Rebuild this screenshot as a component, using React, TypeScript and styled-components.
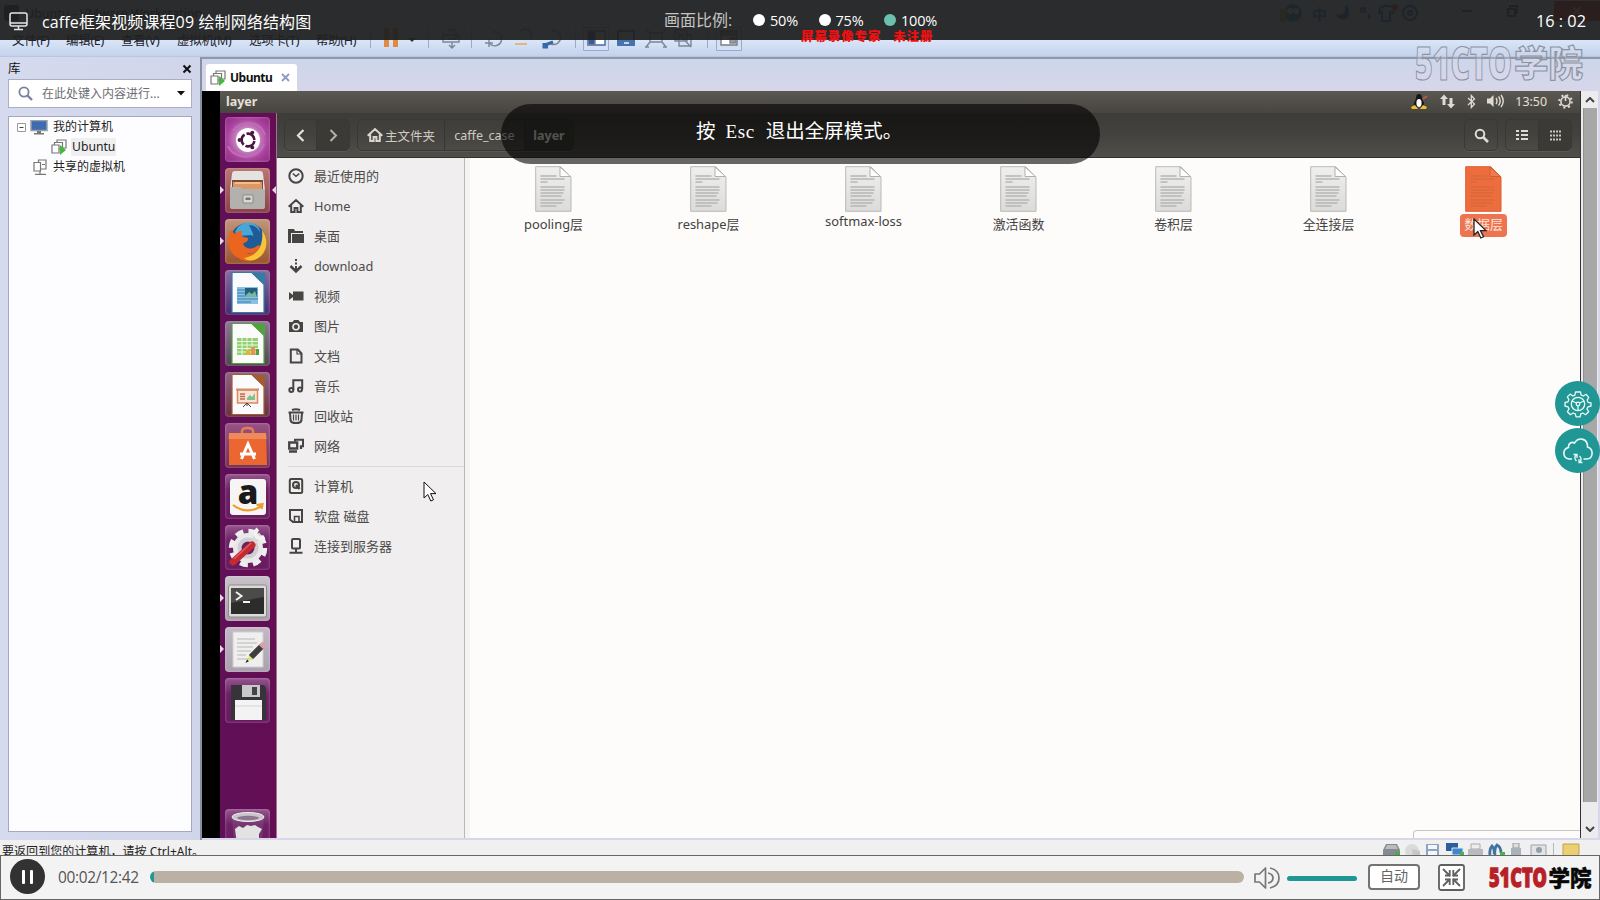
import React from "react";
import styled, { createGlobalStyle } from "styled-components";

const Global = createGlobalStyle`
  * { box-sizing: border-box; }
  body { margin: 0; background: #fff; font-family: "Noto Sans", "Noto Sans CJK SC", sans-serif; }
  svg { display: block; flex: none; }
`;

const Screen = styled.div`
  position: relative;
  width: 1600px;
  height: 900px;
  overflow: hidden;
  display: flex;
  flex-direction: column;
`;

/* ---------- VMware window ---------- */
const Workstation = styled.div`
  height: 855px;
  display: flex;
  flex-direction: column;
  overflow: hidden;
  background: #d3d7eb;
`;
const WindowTitle = styled.div`
  height: 26px;
  flex: none;
  display: flex;
  align-items: center;
  padding-left: 4px;
  gap: 6px;
  background: #d9e3f5;
  font-size: 12.5px;
  color: #111;
  white-space: nowrap;
`;
const TitleMark = styled.span`
  width: 15px;
  height: 16px;
  background: #222;
  border-radius: 3px;
`;
const TitleText = styled.span`
  width: 180px;
`;
const ImeBar = styled.div`
  margin-left: 1068px;
  width: 150px;
  height: 26px;
  display: flex;
  align-items: center;
  gap: 8px;
  color: #0a60d8;
  font-weight: 700;
  font-size: 15px;
`;
const WindowButtons = styled.div`
  display: flex;
  align-items: center;
  height: 22px;
  margin: -4px 0 0 auto;
  gap: 26px;
  color: #111;
  font-size: 14px;
`;
const CloseBox = styled.span`
  width: 46px;
  height: 20px;
  background: #d00000;
  color: #fff;
  text-align: center;
`;
const MenuBar = styled.div`
  height: 31px;
  flex: none;
  display: flex;
  align-items: center;
  padding: 0 0 4px 12px;
  background: linear-gradient(#dbe6f8 30%, #dbe6f8 45%, #c3d2ec);
  border-bottom: 1px solid #bcc5dc;
  font-size: 12.5px;
  color: #1c222c;
`;
const MenuItem = styled.span<{ $w: number }>`
  width: ${(p) => p.$w}px;
  white-space: nowrap;
  letter-spacing: -0.3px;
`;
const Body = styled.div`
  height: 783px;
  flex: none;
  display: flex;
`;
const Library = styled.div`
  width: 200px;
  flex: none;
  padding: 0 8px 0 8px;
  display: flex;
  flex-direction: column;
  background: linear-gradient(90deg, #d6daee, #d0d5ea);
`;
const LibraryHead = styled.div`
  height: 22px;
  flex: none;
  display: flex;
  align-items: center;
  justify-content: space-between;
  font-size: 12.5px;
  line-height: 16px;
  padding-top: 1px;
  color: #111;
`;
const SearchField = styled.div`
  height: 29px;
  flex: none;
  border: 1px solid #a9aec4;
  background: #fff;
  display: flex;
  align-items: center;
  padding: 0 6px 1px 9px;
  font-size: 12px;
  color: #6c6c70;
`;
const SearchHint = styled.span`
  margin-left: 9px;
  flex: 1;
  white-space: nowrap;
`;
const Tree = styled.div`
  margin-top: 8px;
  height: 716px;
  border: 1px solid #a3a9bd;
  background: #fdfdff;
  font-size: 12px;
  color: #222;
`;
const TreeRow = styled.div<{ $indent: number }>`
  height: 20px;
  display: flex;
  align-items: center;
  gap: 4px;
  padding-left: ${(p) => p.$indent}px;
`;
const TreeLabel = styled.span<{ $active?: boolean }>`
  padding: 0 1px;
  line-height: 18px;
  font-size: ${(p) => (p.$active ? 12.2 : 12)}px;
  background: ${(p) => (p.$active ? "#efefef" : "transparent")};
`;
const Main = styled.div`
  flex: 1;
  min-width: 0;
  display: flex;
  flex-direction: column;
  border-top: 2px solid #8d99ad;
  border-left: 2px solid #8790a3;
  background: linear-gradient(#cdd6ea, #d7d6ea 33px);
`;
const TabStrip = styled.div`
  height: 32px;
  flex: none;
  padding: 5px 0 0 4px;
  display: flex;
`;
const Tab = styled.div`
  width: 91px;
  height: 27px;
  background: #fff;
  border-radius: 3px 3px 0 0;
  display: flex;
  align-items: center;
  padding: 0 7px 0 4px;
  font-size: 12px;
  font-weight: 700;
  color: #111;
`;
const TabName = styled.span`
  flex: 1;
  margin-left: 4px;
  letter-spacing: -0.5px;
`;
const Guest = styled.div`
  height: 747px;
  flex: none;
  display: flex;
  overflow: hidden;
`;
const BlackEdge = styled.div`
  width: 18px;
  flex: none;
  background: #000;
`;
const StatusBar = styled.div`
  height: 15px;
  flex: none;
  display: flex;
  justify-content: space-between;
  background: #f0f0f1;
  padding: 2px 20px 0 2px;
  overflow: hidden;
  font-size: 12px;
  line-height: 20px;
  letter-spacing: 0.05px;
  color: #222;
`;
const StatusIcons = styled.div`
  display: flex;
  padding-top: 1px;
`;

/* ---------- Ubuntu guest ---------- */
const Ubuntu = styled.div`
  width: 1361px;
  flex: none;
  display: flex;
  flex-direction: column;
  border-right: 1px solid #333;
`;
const Panel = styled.div`
  height: 22px;
  flex: none;
  display: flex;
  align-items: center;
  justify-content: space-between;
  padding: 0 7px 2px 6px;
  background: linear-gradient(#5b5852, #474540);
  color: #e4e0d8;
`;
const PanelTitle = styled.b`
  font-size: 12.5px;
`;
const Indicators = styled.div`
  display: flex;
  align-items: center;
  gap: 11px;
`;
const Clock = styled.span`
  font-size: 12.4px;
`;
const Session = styled.div`
  flex: 1;
  min-height: 0;
  display: flex;
`;
const Launcher = styled.div`
  width: 57px;
  flex: none;
  padding: 4px 0 0 5px;
  display: flex;
  flex-direction: column;
  gap: 6px;
  background: linear-gradient(90deg, #5f1057, #640d53);
  border-right: 1px solid #9b7497;
  overflow: hidden;
`;
const Tile = styled.div<{ $bg: string; $run?: boolean; $push?: number }>`
  position: relative;
  width: 45px;
  height: 45px;
  flex: none;
  margin-top: ${(p) => p.$push ?? 0}px;
  border-radius: 4px;
  background: ${(p) => p.$bg};
  box-shadow: inset 0 0 2px 1px rgba(255, 255, 255, 0.18);
  &::before {
    content: "";
    display: ${(p) => (p.$run ? "block" : "none")};
    position: absolute;
    left: -5px;
    top: 18px;
    border: 4px solid transparent;
    border-left-color: #e6d7e4;
    border-right-width: 0;
  }
`;
const FocusMark = styled.i`
  position: absolute;
  right: -6px;
  top: 18px;
  border: 4px solid transparent;
  border-right-color: #e6d7e4;
  border-left-width: 0;
`;
const Files = styled.div`
  flex: 1;
  min-width: 0;
  display: flex;
  flex-direction: column;
`;
const Toolbar = styled.div`
  height: 45px;
  flex: none;
  display: flex;
  align-items: center;
  padding: 0 8px 0 7px;
  background: linear-gradient(#3d3c38, #44423e 50%, #504f4a);
  border-bottom: 1px solid #33322f;
  color: #cfcbc3;
  font-size: 12.5px;
`;
const ButtonGroup = styled.div<{ $gap?: number }>`
  height: 32px;
  display: flex;
  margin-left: ${(p) => p.$gap ?? 0}px;
  border: 1px solid #393834;
  border-radius: 5px;
  box-shadow: 0 1px 0 #5a5954;
  overflow: hidden;
`;
const ToolButton = styled.div<{ $w: number; $on?: boolean; $bold?: boolean }>`
  width: ${(p) => p.$w}px;
  display: flex;
  align-items: center;
  justify-content: center;
  gap: 2px;
  white-space: nowrap;
  font-weight: ${(p) => (p.$bold ? 700 : 400)};
  background: ${(p) => (p.$on ? "#3b3a36" : "transparent")};
  & + & { border-left: 1px solid #373632; }
`;
const Fill = styled.div`
  flex: 1;
`;
const Browser = styled.div`
  flex: 1;
  min-height: 0;
  display: flex;
`;
const Places = styled.div`
  width: 188px;
  flex: none;
  padding: 4px 0 0 0;
  background: #f0eeee;
  border-right: 1px solid #b9b6b4;
  color: #4c4b49;
  font-size: 13px;
`;
const Place = styled.div`
  height: 30px;
  display: flex;
  align-items: center;
  gap: 10px;
  padding: 0 0 2px 11px;
  line-height: 18px;
`;
const PlaceName = styled.span<{ $latin?: boolean }>`
  font-size: ${(p) => (p.$latin ? 12.8 : 13)}px;
`;
const PlaceRule = styled.div`
  height: 1px;
  margin: 4px 0 5px 11px;
  background: #dddad8;
`;
const Folder = styled.div`
  flex: 1;
  display: flex;
  flex-direction: column;
  justify-content: space-between;
  align-items: flex-end;
  background: #fdfcfb;
  border-left: 5px solid #f6f4f3;
`;
const FileRow = styled.div`
  width: 1109px;
  display: flex;
  padding: 8px 0 0 5px;
`;
const FileCell = styled.div`
  width: 155px;
  flex: none;
  display: flex;
  flex-direction: column;
  align-items: center;
`;
const FileName = styled.span<{ $selected?: boolean; $lift?: boolean }>`
  margin-top: ${(p) => (p.$lift ? -1 : 2)}px;
  height: 23px;
  line-height: 21px;
  padding: 0 4px;
  border-radius: 4px;
  font-size: 12.9px;
  color: ${(p) => (p.$selected ? "#ffe4d8" : "#44423f")};
  background: ${(p) => (p.$selected ? "#ee7350" : "transparent")};
`;
const HiddenStatus = styled.div`
  width: 167px;
  height: 8px;
  border: 1px solid #c9c7c5;
  border-width: 1px 0 0 1px;
  border-radius: 4px 0 0 0;
`;
const Scroll = styled.div`
  width: 17px;
  display: flex;
  flex-direction: column;
  align-items: center;
  background: #ececee;
`;
const ScrollArrow = styled.div`
  height: 17px;
  display: flex;
  align-items: center;
`;
const Thumb = styled.div`
  width: 14px;
  height: 694px;
  margin-bottom: 18px;
  background: #a7a7a8;
  border-left: 1px solid #919194;
`;

/* ---------- Player overlays ---------- */
const TopOverlay = styled.div`
  position: absolute;
  left: 0;
  top: 0;
  width: 1600px;
  height: 40px;
  display: flex;
  align-items: center;
  padding: 2px 14px 0 9px;
  background: rgba(32, 32, 32, 0.94);
  color: #fff;
  font-family: "Open Sans", "Noto Sans CJK SC", sans-serif;
`;
const CourseName = styled.div`
  width: 622px;
  margin-left: 14px;
  font-size: 16px;
  letter-spacing: 0.12px;
`;
const RatioLabel = styled.span`
  width: 89px;
  margin-top: -5px;
  font-size: 16px;
  color: #c4c4c4;
`;
const Ratio = styled.span<{ $on?: boolean }>`
  width: 65.500px;
  display: flex;
  align-items: center;
  gap: 5px;
  margin-top: -2px;
  font-size: 14.5px;
  letter-spacing: -0.2px;
  &::before {
    content: "";
    width: 12px;
    height: 12px;
    border-radius: 50%;
    background: ${(p) => (p.$on ? "#6cc0ae" : "#fff")};
  }
`;
const TimeNow = styled.span`
  margin-left: auto;
  font-size: 16.3px;
  white-space: pre;
`;
const RedNotice = styled.div`
  position: absolute;
  left: 801px;
  top: 27px;
  font: 900 12.5px/17px "Noto Sans CJK SC", sans-serif;
  letter-spacing: 0.9px;
  word-spacing: 8px;
  color: #f01010;
  white-space: nowrap;
`;
const Watermark = styled.svg`
  position: absolute;
  left: 1412px;
  top: 42px;
`;
const Toast = styled.div`
  position: absolute;
  left: 501px;
  top: 104px;
  width: 599px;
  height: 60px;
  border-radius: 30px;
  background: rgba(0, 0, 0, 0.6);
  color: #fff;
  font: 19.5px/52px "Noto Sans CJK SC", sans-serif;
  padding-left: 195px;
  white-space: nowrap;
`;
const KeyName = styled.span`
  margin: 0 11px 0 10px;
  font: 19px/1 "Liberation Serif", serif;
  letter-spacing: 0.6px;
`;
const FloatButtons = styled.div`
  position: absolute;
  right: 0;
  top: 381px;
  display: flex;
  flex-direction: column;
  gap: 2px;
`;
const RoundButton = styled.div`
  width: 45px;
  height: 45px;
  border-radius: 50%;
  background: #219795;
  display: flex;
  align-items: center;
  justify-content: center;
`;
const Pointer = styled.svg<{ $x: number; $y: number }>`
  position: absolute;
  left: ${(p) => p.$x}px;
  top: ${(p) => p.$y}px;
`;

const Player = styled.div`
  height: 45px;
  display: flex;
  align-items: center;
  padding: 0 6px 1px 9px;
  border: 1px solid #666;
  background: #f4f3f3;
  font-family: "Open Sans", "Noto Sans CJK SC", sans-serif;
`;
const PauseButton = styled.div`
  width: 35px;
  height: 35px;
  margin-top: -1px;
  border-radius: 50%;
  background: #323232;
  display: flex;
  align-items: center;
  justify-content: center;
  gap: 5px;
  &::before, &::after {
    content: "";
    width: 3px;
    height: 14px;
    border-radius: 1px;
    background: #fff;
  }
`;
const Elapsed = styled.span`
  width: 92px;
  margin-left: 13px;
  font-size: 15.4px;
  letter-spacing: -0.3px;
  color: #555;
`;
const Track = styled.div`
  width: 1094px;
  height: 12px;
  border-radius: 6px;
  overflow: hidden;
  background: linear-gradient(90deg, #219795 4px, #bab1a4 4px);
`;
const SpeakerIcon = styled.svg`
  margin: 2px 0 0 10px;
`;
const Volume = styled.div`
  width: 70px;
  height: 5px;
  margin: 2px 0 0 7px;
  border-radius: 3px;
  background: #219795;
`;
const AutoButton = styled.div`
  width: 52px;
  height: 26px;
  margin-left: 11px;
  border: 2px solid #737373;
  border-radius: 4px;
  background: #fff;
  color: #666;
  font-size: 14px;
  line-height: 20px;
  text-align: center;
`;
const ExitFull = styled.svg`
  margin: 1px 0 0 18px;
`;
const Logo = styled.svg`
  margin: 2px 0 0 22px;
`;

/* ---------- Drawings ---------- */
const ink = "#464543";
type S = { children: React.ReactNode };
const G = ({ children }: S) => (
  <svg width="16" height="16" viewBox="0 0 16 16" fill="none" stroke={ink} strokeWidth="2">
    {children}
  </svg>
);

const VmIcon = () => (
  <svg width="16" height="16" viewBox="0 0 16 16" fill="#fff" stroke="#777" strokeWidth="1.200">
    <path d="M6 1h9v8H6z" />
    <path d="M3.500 3.500h8V10h-8z" />
    <path d="M1 6h7v8H1z" />
    <path d="M9 6l6 5-6 5z" fill="#45b93c" stroke="none" />
  </svg>
);
const SharedIcon = () => (
  <svg width="15" height="16" viewBox="0 0 15 16" fill="#fff" stroke="#777" strokeWidth="1.200">
    <path d="M5.500 1H13v9H5.500z" /><path d="M1 3.500h6.500V12H1z" /><path d="M9 5.500h3M7 12v3M2 15.300h11" />
  </svg>
);

const House = ({ c = ink }: { c?: string }) => (
  <svg width="16" height="16" viewBox="0 0 16 16" fill="none" stroke={c} strokeWidth="2">
    <path d="M.7 8.700L8 2l7.300 6.700M3.200 7.500V14h3.400v-4h2.800v4h3.400V7.500" />
  </svg>
);

const places: [string, React.ReactNode][] = [
  ["最近使用的", <G><circle cx="8" cy="8" r="6.700" /><path d="M4.800 5.500L8 8.300l3.300-2.600" strokeWidth="1.500" /></G>],
  ["Home", <House />],
  ["桌面", <G><path d="M0 15V1h6l1 2h8v2H3v10z" fill={ink} stroke="none" /><path d="M4 6h12v9H4z" fill={ink} stroke="none" /></G>],
  ["download", <G><path d="M8 1v2M8 4.500v2M8 8v4" /><path d="M2.500 8L8 13.500 13.500 8" strokeWidth="2.500" /></G>],
  ["视频", <G><path d="M5 3.500h10.500v9H5zM1 4l4 3v2l-4 3z" fill={ink} stroke="none" /></G>],
  ["图片", <G><path d="M1 4h3.500L6 2h4.500L12 4h3v10H1z" fill={ink} stroke="none" /><circle cx="8" cy="8.800" r="3" stroke="#f0eeee" strokeWidth="1.600" /></G>],
  ["文档", <G><path d="M2.800 1.500h7l3.700 4v9H2.800z" /><path d="M9 1v5h5" strokeWidth="1.200" /></G>],
  ["音乐", <G><path d="M5.300 12V2.300h8.900V11" /><circle cx="3.300" cy="12" r="2" /><circle cx="12" cy="11.500" r="2" /></G>],
  ["回收站", <G><path d="M.5 4.500h15M4 2q4-1.500 8 0M2 5l.6 7.500Q3 15 8 15t5.400-2.500L14 5" /><path d="M5.500 6.500v6M8 6.500v6M10.500 6.500v6" strokeWidth="1.200" /></G>],
  ["网络", <G><path d="M7 3.500V1.800h8v6.500h-3" /><path d="M1.200 4.500h8v6h-8z" strokeWidth="2.300" /><path d="M1 13.500h8M13 8v3" strokeWidth="2.300" /></G>],
  ["计算机", <G><rect x="1.800" y="1" width="12.400" height="14" rx="1.500" /><circle cx="8" cy="7" r="3" /><path d="M8 7l3.500 4" strokeWidth="2.500" /></G>],
  ["软盘 磁盘", <G><path d="M2 2h12v12H5l-3-2.500z" /><path d="M6.500 13V8.500H11V13" strokeWidth="1.600" /></G>],
  ["连接到服务器", <G><rect x="4" y="1" width="8" height="9.500" rx="1" /><path d="M8 10v4.500M1.500 14.700h13" /></G>],
];

const Sheet = ({ selected = false }: { selected?: boolean }) => (
  <svg width="37" height="46" viewBox="0 0 37 46">
    <defs>
      <linearGradient id="paper" x2="0" y2="1"><stop stopColor="#efefee" /><stop offset="1" stopColor="#dbdbd9" /></linearGradient>
    </defs>
    <path d="M.7.7h25L36 11v34.300H.7z" fill={selected ? "#ee6d3c" : "url(#paper)"} stroke={selected ? "#d96136" : "#b9b9b7"} />
    <path d="M25 1v9.500h10.500z" fill={selected ? "#f07c4e" : "#fff"} stroke={selected ? "#d35d33" : "#b0b0ae"} />
    <path
      d="M5.500 10h16M5.500 13h24M5.500 16h7M5.500 21h24M5.500 24h24M5.500 27h23M5.500 30h21M5.500 34h24M5.500 37h22M5.500 40h16"
      stroke={selected ? "#d8683c" : "#b6b6b4"} strokeWidth="1.300"
    />
  </svg>
);

const Office = ({ c, d }: { c: string; d: React.ReactNode }) => (
  <svg width="45" height="45" viewBox="0 0 45 45">
    <path d="M7 2.500h20L39 14v28.500H7z" fill="#fbfbfb" stroke={c} strokeWidth="1.200" />
    <path d="M26 2.500h14V16z" fill={c} />
    {d}
  </svg>
);

const purple = "linear-gradient(#95558d, #6d2265 35%, #691a60)";
const launcher: { bg: string; run?: boolean; focus?: boolean; push?: number; art: React.ReactNode }[] = [
  {
    bg: "radial-gradient(circle at 50% 50%, #d79bd0 25%, #a9429d 65%, #8d2983)",
    art: (
      <svg width="45" height="45" viewBox="0 0 45 45" fill="none">
        <path d="M3 29C9 43 33 44 39 27M8 14C15 3 35 3 40 18" stroke="#bd6fb4" strokeWidth="2" />
        <circle cx="23" cy="23" r="12" fill="#fff" />
        <circle cx="23" cy="23" r="6.400" stroke="#4a1744" strokeWidth="2.600" strokeDasharray="11.400 2" strokeDashoffset="-1" />
        <g fill="#4a1744"><circle cx="14.500" cy="23" r="1.900" /><circle cx="27.300" cy="15.600" r="1.900" /><circle cx="27.300" cy="30.400" r="1.900" /></g>
      </svg>
    ),
  },
  {
    bg: "linear-gradient(#ba7774, #8b4048)", run: true, focus: true,
    art: (
      <svg width="45" height="45" viewBox="0 0 45 45">
        <path d="M7 6q0-3 3-3h25q3 0 3 3l2 16H5z" fill="#e4e3e0" />
        <path d="M7 12h31v9H7z" fill="#7c4b36" /><path d="M8 14h29v7H8z" fill="#df9666" /><path d="M10 14h25v2H10z" fill="#f4bd8c" />
        <path d="M5 19h10l3 2h22v18q0 2-3 2H8q-3 0-3-2z" fill="#b2b1ae" />
        <path d="M18 27h10v8H18z" fill="#d9d8d4" stroke="#8b8985" /><path d="M20.500 29.500h5V32h-5z" fill="#777" />
      </svg>
    ),
  },
  {
    bg: "linear-gradient(#c2967b, #9a532e)", run: true,
    art: (
      <svg width="45" height="45" viewBox="0 0 45 45">
        <circle cx="23" cy="22" r="18" fill="#1f5c97" />
        <path d="M13 8c6-6 16-6 21 1 2 4 0 8-3 10l-5-3-12 1-4-4z" fill="#4aa6d6" />
        <path d="M24 6c8 0 13 7 11 14-3 3-6 2-7-1 1-5-2-8-4-13z" fill="#1f5c97" />
        <path d="M6 11l4 4c2-3 5-3 7-3-1 3 0 5 1 6l5 1c1 4-4 4-5 6 2 5 9 6 14 2 1-1 3-1 3 0-2 7-11 9-16 6 8 5 17-1 19-12 3 13-5 21-15 21C8 41-2 26 6 11z" fill="#ec651f" />
        <path d="M37 11c8 10 5 26-8 30-4 1-8 0-10-2 13-2 20-12 18-28z" fill="#f9c536" />
      </svg>
    ),
  },
  {
    bg: "linear-gradient(#8a6b9f, #432d6f)",
    art: <Office c="#347ba5" d={<><path d="M12 17h21v17H12z" fill="#8bc0e2" /><path d="M12 20h21M12 23h21M12 26h21M12 29h21M12 32h14" stroke="#357fae" /><path d="M20 18h12v9H20z" fill="#255f79" /><path d="M20 26l4-4 3 2 3-3 2 6H20z" fill="#77b6a2" /></>} />,
  },
  {
    bg: "linear-gradient(#91769a, #51464f)",
    art: <Office c="#4da53a" d={<><path d="M12 17h21v17H12z" fill="#93d072" /><path d="M12 20.500h21M12 24h21M12 27.500h21M12 31h21M17 17v17M22 17v17M27 17v17" stroke="#e9f8e0" /><path d="M21 29h4v5h-4z" fill="#e3b52f" /><path d="M26 26h4v8h-4z" fill="#ed8f52" /><path d="M31 28h3v6h-3z" fill="#4da53a" /></>} />,
  },
  {
    bg: "linear-gradient(#8d6285, #69313f)",
    art: <Office c="#a35b31" d={<><path d="M12.500 18h20v13h-20z" fill="#fae3d4" stroke="#d68a66" strokeWidth="1.500" /><path d="M11 17.500h23" stroke="#d68a66" strokeWidth="2" /><path d="M15 22h5M15 24.500h5M15 27h5" stroke="#b86f50" strokeWidth="1.500" /><path d="M22 26l3-3 2 2 3-4v7h-8z" fill="#7ec18a" /><path d="M22 31l-4 4M22 31l4 4M22 31v3" stroke="#444" /></>} />,
  },
  {
    bg: "linear-gradient(#975285, #743054)",
    art: (
      <svg width="45" height="45" viewBox="0 0 45 45">
        <path d="M17 13V8q0-3 5.500-3T28 8v5" fill="none" stroke="#e47d51" strokeWidth="2.500" />
        <path d="M4 10h37l1 32H4z" fill="#ea6731" /><path d="M4 10h37l.5 6h-38z" fill="#f18a59" />
        <path d="M16.500 36L23 21l6.500 15M15 31h16" fill="none" stroke="#fff" strokeWidth="3" />
      </svg>
    ),
  },
  {
    bg: purple,
    art: (
      <svg width="45" height="45" viewBox="0 0 45 45">
        <rect x="5" y="5" width="36" height="36" rx="3" fill="#f6f4f5" />
        <text x="23" y="29.500" textAnchor="middle" fontFamily="Open Sans" fontWeight="800" fontSize="33" fill="#1a1a1a">a</text>
        <path d="M8 31c9 7 20 7 28 1M31.500 31l6-1-1 5" fill="none" stroke="#f09a2a" strokeWidth="2.200" />
      </svg>
    ),
  },
  {
    bg: purple,
    art: (
      <svg width="45" height="45" viewBox="0 0 45 45" fill="none">
        <circle cx="23" cy="23" r="16" stroke="#efeeef" strokeWidth="6.500" strokeDasharray="7.560 5" />
        <circle cx="23" cy="23" r="11" stroke="#e9e8ea" strokeWidth="8" />
        <circle cx="23" cy="23" r="8.500" stroke="#cfced1" strokeWidth="4" />
        <path d="M28 16L36 10" stroke="#d9d9d9" strokeWidth="6" /><path d="M33 4q-4 3-1.500 7t8 1" stroke="#f2f2f2" strokeWidth="4" />
        <path d="M27 20L8 37" stroke="#c42a31" strokeWidth="7" strokeLinecap="round" /><path d="M26 18L9 34" stroke="#e25a5c" strokeWidth="1.500" />
      </svg>
    ),
  },
  {
    bg: "linear-gradient(#c9c2ca, #a99fab)", run: true,
    art: (
      <svg width="45" height="45" viewBox="0 0 45 45">
        <rect x="3.500" y="9" width="38" height="32" rx="2" fill="#dcdbd9" stroke="#8e8c8a" />
        <path d="M6 12h33v26H6z" fill="#2c2c2b" /><path d="M6 12h33v9L6 27z" fill="#4b4b4a" />
        <path d="M11 16l5.500 4-5.500 4M18 26h7" fill="none" stroke="#f1f1f0" strokeWidth="2" />
      </svg>
    ),
  },
  {
    bg: "linear-gradient(#c3b9c5, #aaa0ae)", run: true,
    art: (
      <svg width="45" height="45" viewBox="0 0 45 45">
        <path d="M8 5h30v35H8z" fill="#efefee" stroke="#d0cfd0" />
        <path d="M12 12h18M12 16h20M12 20h16M12 24h14M12 28h9M12 32h16" stroke="#cacaca" strokeWidth="1.300" />
        <path d="M22 34l3-7 4 4z" fill="#e3df64" /><path d="M26 30L37 19" stroke="#3d3d3d" strokeWidth="6" /><path d="M36 20l3.500-3.500" stroke="#dda0a8" strokeWidth="6" />
        <path d="M20.500 36l1.500-3.500 2 1.800z" fill="#222" />
      </svg>
    ),
  },
  {
    bg: purple,
    art: (
      <svg width="45" height="45" viewBox="0 0 45 45">
        <path d="M6 7h33l2 3v32H6z" fill="#36343a" /><path d="M17 7h18v12H17z" fill="#c8c8ca" /><path d="M27 9h5v8h-5z" fill="#444" />
        <path d="M10 22h27v20H10z" fill="#f3f3f3" /><path d="M10 28h27" stroke="#d5d5d5" />
      </svg>
    ),
  },
  {
    bg: purple, push: 80,
    art: (
      <svg width="45" height="45" viewBox="0 0 45 45">
        <path d="M7 9h32l-3 34H10z" fill="#a585a5" opacity=".2" />
        <ellipse cx="23" cy="8" rx="16" ry="4.500" fill="#c9c3ca" stroke="#eee" /><ellipse cx="23" cy="9" rx="11" ry="2.200" fill="#8d7690" />
        <path d="M10 20l4-3 4 2 4-3 4 1 4-1 3 2 4 2-3 5v10H12z" fill="#e4e3e3" />
      </svg>
    ),
  },
];

const files = ["pooling层", "reshape层", "softmax-loss", "激活函数", "卷积层", "全连接层", "数据层"];

const arrowPath = "M1 1v16l3.800-3.500 3 6.500 2.700-1.200-3-6.200H13z";

const ToolIcons = () => (
  <svg width="390" height="32" viewBox="0 0 390 32" fill="none" stroke="#7d8796" strokeWidth="1.400">
    <path d="M13.500 6v19M71.500 6v19M114.500 6v19M218.500 6v19M350.500 6v19" stroke="#9fabc0" strokeWidth="1" />
    <path d="M27 5h5v19h-5zM36 5h5v19h-5z" fill="#e28b40" stroke="none" />
    <path d="M51 15h8l-4 4z" fill="#333" stroke="none" />
    <path d="M86 12h16v7H86zM91 7h8v9h-8M95 19v6M92 22l3 3 3-3" />
    <path d="M136 9a7 7 0 11-3 12M128 20h8M132 16v8" /><path d="M158 21h12" stroke="#dfb97b" strokeWidth="2" /><path d="M162 10a6 6 0 0112 5" />
    <path d="M194 8a7 7 0 110 13" /><path d="M188 22l8-3M187 20v4h4" stroke="#3668ac" strokeWidth="3" />
    <path d="M226.500 4.500h25v23h-25z" stroke="#9aabd0" fill="#d6e0f5" strokeWidth="1" />
    <path d="M231 8h17v14h-17z" fill="#fff" stroke="#416aa6" /><path d="M231 8h7v14h-7z" fill="#315f9f" />
    <path d="M260 7h18v16h-18z" fill="#4673ae" stroke="none" /><path d="M262 9h14v8h-14z" fill="#edf2fa" stroke="none" /><path d="M267 20h5" stroke="#fff" />
    <path d="M293 10h12v9h-12zM289 6l4 4M309 6l-4 4M289 24l4-5M309 24l-4-5M288 24h4M306 24h4" />
    <path d="M318 7h12v11h-12zM322 12h12v11h-12zM318 7l16 17" />
    <path d="M359.500 4.500h25v23h-25z" stroke="#9aabd0" fill="#d6e0f5" strokeWidth="1" />
    <path d="M364 8h16v14h-16z" fill="#fff" stroke="#7c7d80" /><path d="M364 8h16v4h-16zM373 15h6v5h-6z" fill="#9a9b9d" />
  </svg>
);

export default function App() {
  return (
    <>
      <Global />
      <Screen>
        <Workstation>
          <WindowTitle>
            <TitleMark />
            <TitleText>Ubuntu - VMware Workstation</TitleText>
            <ImeBar>
              <svg width="25" height="25" viewBox="0 0 25 25"><circle cx="14" cy="12" r="9" fill="#1688d8" /><circle cx="11" cy="10" r="3" fill="#fff" /><circle cx="17" cy="10" r="3" fill="#fff" /><path d="M1 8h6v13H1z" fill="#a6b51c" /></svg>
              <span>中</span>
              <svg width="84" height="20" viewBox="0 0 84 20" fill="none" stroke="#0a60d8" strokeWidth="2"><path d="M11 3c1 8-3 10-8 10 6 6 14 0 8-10z" fill="#0a60d8" /><circle cx="28" cy="7" r="2" /><path d="M34 11v5" /><path d="M45 5l4-2h6l5 3-2 4-3-1v9h-8V9l-3 1z" /><circle cx="60" cy="4" r="3" fill="#d22" stroke="none" /><circle cx="75" cy="10" r="7" /><circle cx="75" cy="10" r="2" /></svg>
            </ImeBar>
            <WindowButtons>
              <svg width="10" height="12" viewBox="0 0 10 12"><path d="M0 6h10" stroke="#111" strokeWidth="1.500" /></svg>
              <svg width="30" height="12" viewBox="0 0 30 12" fill="none" stroke="#111" strokeWidth="1.500"><path d="M10 4h7v7h-7zM12 4V1h7v7h-2" /></svg>
              <CloseBox>✕</CloseBox>
            </WindowButtons>
          </WindowTitle>
          <MenuBar>
            <MenuItem $w={54}>文件(F)</MenuItem>
            <MenuItem $w={55}>编辑(E)</MenuItem>
            <MenuItem $w={56}>查看(V)</MenuItem>
            <MenuItem $w={72}>虚拟机(M)</MenuItem>
            <MenuItem $w={67}>选项卡(T)</MenuItem>
            <MenuItem $w={41}>帮助(H)</MenuItem>
            <ToolIcons />
          </MenuBar>
          <Body>
            <Library>
              <LibraryHead>
                <span>库</span>
                <svg width="10" height="10" viewBox="0 0 10 10"><path d="M1.500 1.500l7 7M8.500 1.500l-7 7" stroke="#111" strokeWidth="2" /></svg>
              </LibraryHead>
              <SearchField>
                <svg width="15" height="15" viewBox="0 0 15 15" fill="none" stroke="#7a82a0" strokeWidth="1.800"><circle cx="6" cy="6" r="4.600" /><path d="M9.500 9.500l4.500 4.500" strokeWidth="2.400" /></svg>
                <SearchHint>在此处键入内容进行...</SearchHint>
                <svg width="8" height="5" viewBox="0 0 8 5"><path d="M0 0h8L4 4.500z" fill="#111" /></svg>
              </SearchField>
              <Tree>
                <TreeRow $indent={8}>
                  <svg width="9" height="9" viewBox="0 0 9 9" fill="#fff" stroke="#999"><path d="M.5.5h8v8h-8z" /><path d="M2.500 4.500h4" stroke="#444" /></svg>
                  <svg width="18" height="15" viewBox="0 0 18 15"><path d="M1 .5h16v10H1z" fill="#3f6cb0" stroke="#98a0ac" strokeWidth="1.500" /><path d="M7 11h4v2h3v1.500H4V13h3z" fill="#777" /></svg>
                  <TreeLabel>我的计算机</TreeLabel>
                </TreeRow>
                <TreeRow $indent={42}><VmIcon /><TreeLabel $active>Ubuntu</TreeLabel></TreeRow>
                <TreeRow $indent={24}><SharedIcon /><TreeLabel>共享的虚拟机</TreeLabel></TreeRow>
              </Tree>
            </Library>
            <Main>
              <TabStrip>
                <Tab>
                  <VmIcon />
                  <TabName>Ubuntu</TabName>
                  <svg width="9" height="9" viewBox="0 0 9 9"><path d="M1 1l7 7M8 1L1 8" stroke="#8d9bc4" strokeWidth="1.800" /></svg>
                </Tab>
              </TabStrip>
              <Guest>
                <BlackEdge />
                <Ubuntu>
                  <Panel>
                    <PanelTitle>layer</PanelTitle>
                    <Indicators>
                      <svg width="17" height="17" viewBox="0 0 17 17"><path d="M8 1c4 0 2 4 4 7s1 6-4 6-6-3-4-6 0-7 4-7z" fill="#161616" /><ellipse cx="8" cy="10" rx="2.600" ry="4" fill="#fff" /><path d="M0 14l4-2 3 4H1zM16 14l-4-2-3 4h6z" fill="#f2bf28" /><path d="M12 6l4-3" stroke="#b65c4c" strokeWidth="2" /></svg>
                      <svg width="17" height="15" viewBox="0 0 17 15" fill="#dfdbd2"><path d="M1 5l4-4.500L9 5H6.500v6h-3V5zM8 10l4 4.500 4-4.500h-2.500V4h-3v6z" /></svg>
                      <svg width="9" height="15" viewBox="0 0 9 15" fill="none" stroke="#dfdbd2" strokeWidth="1.300"><path d="M1 4l6.500 6L4.300 13.500V1.500L7.500 5 1 11" /></svg>
                      <svg width="17" height="14" viewBox="0 0 17 14" fill="none" stroke="#dfdbd2" strokeWidth="1.400"><path d="M0 4.500h3L6.500 1v12L3 9.500H0z" fill="#dfdbd2" stroke="none" /><path d="M9 4q2 3 0 6M11.500 2.500q3.500 4.500 0 9M14 1q4.500 6 0 12" /></svg>
                      <Clock>13:50</Clock>
                      <svg width="15" height="15" viewBox="0 0 15 15" fill="none" stroke="#dfdbd2"><circle cx="7.500" cy="7.500" r="4.600" strokeWidth="1.600" /><circle cx="7.500" cy="7.500" r="6.300" strokeWidth="2" strokeDasharray="2 2.950" /><path d="M7.500 1v6" strokeWidth="1.600" /></svg>
                    </Indicators>
                  </Panel>
                  <Session>
                    <Launcher>
                      {launcher.map((t, i) => (
                        <Tile key={i} $bg={t.bg} $run={t.run} $push={t.push}>{t.art}{t.focus && <FocusMark />}</Tile>
                      ))}
                    </Launcher>
                    <Files>
                      <Toolbar>
                        <ButtonGroup>
                          <ToolButton $w={31}><svg width="9" height="13" viewBox="0 0 9 13"><path d="M7.500 1L2 6.500 7.500 12" fill="none" stroke="#e4e1da" strokeWidth="2.200" /></svg></ToolButton>
                          <ToolButton $w={33} $on><svg width="9" height="13" viewBox="0 0 9 13"><path d="M1.500 1L7 6.500 1.500 12" fill="none" stroke="#b5b2ab" strokeWidth="2" /></svg></ToolButton>
                        </ButtonGroup>
                        <ButtonGroup $gap={7}>
                          <ToolButton $w={86}><House c="#d9d6ce" />主文件夹</ToolButton>
                          <ToolButton $w={80}>caffe_case</ToolButton>
                          <ToolButton $w={49} $on $bold>layer</ToolButton>
                        </ButtonGroup>
                        <Fill />
                        <ButtonGroup>
                          <ToolButton $w={32}><svg width="15" height="15" viewBox="0 0 15 15" fill="none" stroke="#dedbd3"><circle cx="6" cy="6" r="4.300" strokeWidth="2" /><path d="M9 9l5 5" strokeWidth="2.600" /></svg></ToolButton>
                        </ButtonGroup>
                        <ButtonGroup $gap={7}>
                          <ToolButton $w={32}><svg width="12" height="12" viewBox="0 0 12 12" stroke="#dedbd3" strokeWidth="2"><path d="M0 2h3M5 2h7M0 6h3M5 6h7M0 10h3M5 10h7" /></svg></ToolButton>
                          <ToolButton $w={33} $on><svg width="11" height="11" viewBox="0 0 11 11" stroke="#c9c6be" strokeWidth="2"><path d="M0 1.500h11M0 5.500h11M0 9.500h11" strokeDasharray="2 1" /></svg></ToolButton>
                        </ButtonGroup>
                      </Toolbar>
                      <Browser>
                        <Places>
                          {places.map(([name, icon], i) => (
                            <React.Fragment key={name}>
                              {i === 10 && <PlaceRule />}
                              <Place>{icon}<PlaceName $latin={i === 1 || i === 3}>{name}</PlaceName></Place>
                            </React.Fragment>
                          ))}
                        </Places>
                        <Folder>
                          <FileRow>
                            {files.map((f, i) => (
                              <FileCell key={f}>
                                <Sheet selected={i === 6} />
                                <FileName $selected={i === 6} $lift={i === 2}>{f}</FileName>
                              </FileCell>
                            ))}
                          </FileRow>
                          <HiddenStatus />
                        </Folder>
                      </Browser>
                    </Files>
                  </Session>
                </Ubuntu>
                <Scroll>
                  <ScrollArrow><svg width="10" height="6" viewBox="0 0 10 6"><path d="M1 5l4-4 4 4" fill="none" stroke="#444" strokeWidth="2" /></svg></ScrollArrow>
                  <Thumb />
                  <ScrollArrow><svg width="10" height="6" viewBox="0 0 10 6"><path d="M1 1l4 4 4-4" fill="none" stroke="#444" strokeWidth="2" /></svg></ScrollArrow>
                </Scroll>
              </Guest>
            </Main>
          </Body>
          <StatusBar>
            <span>要返回到您的计算机，请按 Ctrl+Alt。</span>
            <StatusIcons>
              <svg width="197" height="14" viewBox="0 0 197 14">
                <path d="M3 1h11l3 6v5H0V7z" fill="#868b91" /><path d="M4 2h9l2 4H2z" fill="#b9bdc2" /><path d="M12 9h5v4h-5z" fill="#3fb243" />
                <circle cx="29" cy="8" r="7" fill="#d9dadb" /><path d="M29 6l8 2v6h-7z" fill="#c4c6c8" />
                <path d="M43 1h13v12H43z" fill="#8ea4c3" /><path d="M45 2h9v4h-9zM45 8h9v5h-9z" fill="#f4f6f8" />
                <path d="M63 0h12v8H63z" fill="#2a5f9b" /><path d="M69 5h11v7H69z" fill="#3e87cb" stroke="#d7e6f5" /><path d="M77 9h4v4h-4z" fill="#44b648" />
                <path d="M88 1h9v5h-9z" fill="#eee" stroke="#aaa" /><path d="M85 6h15v6H85z" fill="#b8babd" />
                <path d="M107 12q-1-6 2-9 3 3 2 8M112 12q-1-7 2-10 4 2 4 8" fill="none" stroke="#4374a1" strokeWidth="2.800" /><path d="M117 9h5v4h-5z" fill="#44b648" />
                <path d="M130 0h6v5h-6z" fill="#ddd" stroke="#999" /><path d="M128 5h10v9h-10z" fill="#a9b1bb" />
                <path d="M148 2h15v11h-15z" fill="#e1e3e7" stroke="#9ca2ad" /><circle cx="156" cy="7" r="3" fill="#949da9" />
                <path d="M170.500 0v14" stroke="#afb9c9" /><path d="M180 1h16v10l-4 3h-12z" fill="#ebcf72" stroke="#c2a345" />
              </svg>
            </StatusIcons>
          </StatusBar>
        </Workstation>

        <Player>
          <PauseButton />
          <Elapsed>00:02/12:42</Elapsed>
          <Track />
          <SpeakerIcon width="26" height="24" viewBox="0 0 26 24" fill="none" stroke="#777" strokeWidth="1.700">
            <path d="M1 8h4.500L11.500 2v20l-6-6H1z" strokeLinejoin="round" /><path d="M14 7q5 1 5 5t-5 5M16 2q9 2 9 10t-9 10" />
          </SpeakerIcon>
          <Volume />
          <AutoButton>自动</AutoButton>
          <ExitFull width="27" height="27" viewBox="0 0 27 27" fill="none" stroke="#5f5f5f" strokeWidth="1.800">
            <rect x="1" y="1" width="25" height="25" rx="2" fill="#fff" />
            <path d="M5 5l7 7M22 5l-7 7M5 22l7-7M22 22l-7-7" />
            <path d="M7 11.500h4.700V6M20 11.500h-4.700V6M7 15.500h4.700V21M20 15.500h-4.700V21" />
          </ExitFull>
          <Logo width="106" height="26" viewBox="0 0 106 26">
            <text x="2" y="22" fontFamily="Open Sans" fontWeight="800" fontSize="26" fill="#b91f27" stroke="#b91f27" strokeWidth="1.300" textLength="58" lengthAdjust="spacingAndGlyphs">51CTO</text>
            <text x="61.500" y="21" fontFamily="Noto Sans CJK SC" fontWeight="900" fontSize="21.500" fill="#080808" stroke="#080808" strokeWidth=".5" textLength="43" lengthAdjust="spacingAndGlyphs">学院</text>
          </Logo>
        </Player>

        <TopOverlay>
          <svg width="19" height="19" viewBox="0 0 19 19" fill="none" stroke="#e5e5e5" strokeWidth="1.500"><rect x="1" y="1" width="17" height="13" rx="2" /><path d="M1 11h17M9.500 14v3M5 17.500h9" /></svg>
          <CourseName>caffe框架视频课程09 绘制网络结构图</CourseName>
          <RatioLabel>画面比例:</RatioLabel>
          <Ratio>50%</Ratio>
          <Ratio>75%</Ratio>
          <Ratio $on>100%</Ratio>
          <TimeNow>16 : 02</TimeNow>
        </TopOverlay>
        <RedNotice>屏幕录像专家 未注册</RedNotice>
        <Watermark width="174" height="42" viewBox="0 0 174 42" fill="rgba(225,225,235,.25)" stroke="#8e93a1" strokeWidth="1.200">
          <text x="3" y="37.500" fontFamily="Open Sans" fontWeight="800" fontSize="46" textLength="97" lengthAdjust="spacingAndGlyphs">51CTO</text>
          <text x="102" y="34.500" fontFamily="Noto Sans CJK SC" fontWeight="900" fontSize="36" textLength="69" lengthAdjust="spacingAndGlyphs">学院</text>
        </Watermark>
        <Toast>按<KeyName>Esc</KeyName>退出全屏模式。</Toast>
        <FloatButtons>
          <RoundButton>
            <svg width="28" height="28" viewBox="0 0 28 28" fill="none" stroke="#eafafa" strokeWidth="1.300" strokeLinejoin="round">
              <path d="M11.500 2h5l.6 3 2.200 1 2.900-1.700 2.500 3-1.500 2.800.8 2.200 3 .7v3l-3 .8-1 2.200 1.700 2.700-3.200 3-2.700-1.700-2 .9-.7 3h-4l-.8-3-2.200-.9-2.700 1.700-3-3L5 18.900l-1-2.100L1 16v-3.500l3-.7.900-2.200-1.600-2.700 2.900-2.800L8.900 6l2-.9z" />
              <circle cx="14" cy="14" r="6.700" /><circle cx="14" cy="14" r="1.800" /><path d="M14 16v4.500M12.500 13L8 11M15.500 13l4.500-2" />
            </svg>
          </RoundButton>
          <RoundButton>
            <svg width="32" height="28" viewBox="0 0 32 28" fill="none" stroke="#eafafa" strokeWidth="1.600">
              <path d="M10 22H7C.5 21 0 12 6.500 10.500 6 6 10 4.500 12.500 6 17-1 26 2 25.500 10 32 12 31.500 22 24.500 22H21.500" />
              <path d="M14 18q-2.500 3 .5 6M11.500 17.500H15v3.500M18 25q2.500-3-.5-6M20.500 25.500H17V22" strokeWidth="1.300" />
            </svg>
          </RoundButton>
        </FloatButtons>
        <Pointer $x={1473} $y={218} width="14" height="21" viewBox="0 0 14 21"><path d={arrowPath} fill="#fff" stroke="#222" strokeWidth="1.300" /></Pointer>
        <Pointer $x={423} $y={481} width="14" height="21" viewBox="0 0 14 21"><path d={arrowPath} fill="#fff" stroke="#111" /></Pointer>
      </Screen>
    </>
  );
}
